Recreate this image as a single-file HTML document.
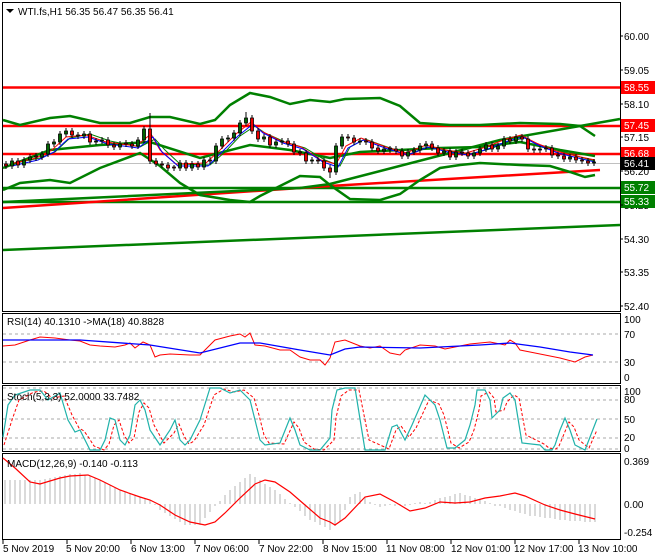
<!DOCTYPE html>
<html><head><meta charset="utf-8">
<style>
html,body{margin:0;padding:0;background:#fff;}
svg{display:block;font-family:"Liberation Sans",sans-serif;font-size:10px;}
</style></head><body>
<svg width="660" height="560" viewBox="0 0 660 560" xmlns="http://www.w3.org/2000/svg">
<rect width="660" height="560" fill="#fff"/>
<g fill="none" stroke="#000" stroke-width="1">
<rect x="2.5" y="2.5" width="618" height="309"/>
<rect x="2.5" y="313.5" width="618" height="70"/>
<rect x="2.5" y="385.5" width="618" height="66"/>
<rect x="2.5" y="453.5" width="618" height="86"/>
</g>

<!-- main chart -->
<line x1="3" y1="163.5" x2="620" y2="163.5" stroke="#c0c0c0"/>
<g stroke-width="2.5">
<line x1="3" y1="87.5" x2="620" y2="87.5" stroke="#f00"/>
<line x1="3" y1="126" x2="620" y2="126" stroke="#f00"/>
<line x1="3" y1="154" x2="620" y2="154" stroke="#f00"/>
<line x1="3" y1="188" x2="620" y2="188" stroke="#008000"/>
<line x1="3" y1="202" x2="620" y2="202" stroke="#008000"/>
</g>
<g fill="none" stroke-width="2.5">
<polyline points="3,250 620,225" stroke="#008000"/>
<polyline points="3,208 330,186 600,170" stroke="#f00"/>
<polyline points="3,202 300,188 330,184 500,140 620,119" stroke="#008000"/>
<polyline stroke="#008000" points="3,120 20,125 50,118 70,116 100,123 130,123 150,117 170,117 200,124 215,120 230,105 250,93 270,97 290,104 310,100 330,102 345,99 380,98 400,106 420,123 450,125 480,125 520,123 560,124 580,126 595,136"/>
<polyline stroke="#008000" points="3,190 20,183 50,180 70,183 100,168 140,153 160,166 180,183 200,195 230,200 250,202 260,196 280,186 300,176 320,177 330,185 350,199 380,200 400,194 420,180 440,168 460,165 480,163 520,165 550,166 570,172 585,177 595,175"/>
<polyline stroke="#008000" points="3,168 50,150 100,145 150,142 200,158 250,145 290,150 330,158 360,152 400,150 440,148 480,147 520,142 560,150 595,156"/>
</g>
<g fill="none" stroke-width="1">
<polyline stroke="#008000" points="15,163 40,158 55,152 70,138 90,134 110,141 140,147 155,139 165,150 180,164 210,165 225,152 240,136 255,126 265,133 285,142 305,148 325,160 340,166 350,147 365,139 390,148 410,154 430,147 450,151 470,154 490,149 510,141 525,138 540,145 560,151 580,157 595,161"/>
<polyline stroke="#f00" points="10,164 36,158 52,150 66,137 86,135 106,142 136,146 151,134 160,150 176,164 206,163 220,150 236,134 251,122 261,131 281,141 301,147 321,160 336,164 346,146 361,138 386,147 406,153 426,145 446,150 466,153 486,147 506,139 521,135 536,143 556,151 576,156 595,160"/>
<polyline stroke="#00f" points="12,166 38,160 54,152 68,139 88,137 108,144 138,148 153,137 162,152 178,166 208,166 222,152 238,136 253,124 263,133 283,143 303,149 323,162 338,167 348,148 363,140 388,149 408,155 428,147 448,152 468,155 488,149 508,141 523,137 538,145 558,153 578,158 595,162"/>
</g>
<path stroke="#000" stroke-width="1" fill="none" d="M6 161V169M12 158V169M18 158V168M24 157V168M30 154V163M36 153V161M42 151V160M48 141V157M54 139V147M60 131V145M66 128V137M72 128V138M78 132V139M84 131V139M90 131V145M96 138V145M102 137V144M108 137V148M114 142V150M120 141V150M126 140V147M132 141V149M138 137V149M144 126V143M150 113V164M156 158V167M162 161V168M168 162V171M174 165V171M180 160V171M186 160V171M192 161V171M198 161V170M204 157V170M210 157V164M216 143V164M222 136V149M228 135V142M234 130V141M240 120V136M246 112V126M252 115V134M258 128V142M264 134V142M270 134V148M276 139V148M282 138V145M288 138V147M294 141V155M300 149V156M306 150V164M312 157V164M318 157V164M324 158V171M330 165V178M336 143V175M342 134V149M348 134V141M354 135V145M360 138V145M366 138V145M372 139V151M378 145V154M384 146V154M390 146V153M396 146V154M402 148V159M408 149V159M414 147V155M420 143V153M426 141V149M432 141V151M438 145V156M444 148V156M450 148V160M456 149V160M462 149V156M468 150V159M474 150V159M480 146V156M486 142V152M492 142V152M498 143V152M504 136V149M510 136V144M516 134V144M522 134V142M528 136V152M534 146V153M540 146V153M546 145V152M552 145V158M558 152V159M564 153V162M570 154V162M576 154V163M582 157V164M588 158V166M594 159V166"/>
<path fill="#006400" stroke="#000" stroke-width="0.8" d="M10.5 161h3v5h-3zM22.5 160h3v5h-3zM28.5 157h3v3h-3zM40.5 154h3v3h-3zM46.5 144h3v10h-3zM52.5 142h3v2h-3zM58.5 134h3v8h-3zM64.5 131h3v3h-3zM82.5 134h3v2h-3zM94.5 141h3v1h-3zM100.5 140h3v1h-3zM118.5 144h3v3h-3zM136.5 140h3v6h-3zM142.5 129h3v11h-3zM178.5 163h3v5h-3zM190.5 164h3v4h-3zM202.5 160h3v7h-3zM214.5 146h3v15h-3zM220.5 139h3v7h-3zM226.5 138h3v1h-3zM232.5 133h3v5h-3zM238.5 123h3v10h-3zM244.5 118h3v5h-3zM262.5 137h3v2h-3zM274.5 142h3v3h-3zM280.5 141h3v1h-3zM310.5 160h3v1h-3zM334.5 146h3v26h-3zM340.5 137h3v9h-3zM358.5 141h3v1h-3zM382.5 149h3v2h-3zM406.5 152h3v4h-3zM412.5 150h3v2h-3zM418.5 146h3v4h-3zM424.5 144h3v2h-3zM442.5 151h3v2h-3zM454.5 152h3v5h-3zM472.5 153h3v3h-3zM478.5 149h3v4h-3zM484.5 145h3v4h-3zM496.5 146h3v3h-3zM502.5 139h3v7h-3zM514.5 137h3v4h-3zM538.5 149h3v1h-3zM544.5 148h3v1h-3zM568.5 157h3v2h-3zM592.5 162h3v1h-3z"/>
<path fill="#e00" stroke="#000" stroke-width="0.8" d="M4.5 164h3v2h-3zM16.5 161h3v4h-3zM34.5 156h3v1h-3zM70.5 131h3v4h-3zM76.5 135h3v1h-3zM88.5 134h3v8h-3zM106.5 140h3v5h-3zM112.5 145h3v2h-3zM124.5 143h3v1h-3zM130.5 144h3v2h-3zM148.5 129h3v32h-3zM154.5 161h3v3h-3zM160.5 164h3v1h-3zM166.5 165h3v3h-3zM172.5 167h3v1h-3zM184.5 163h3v5h-3zM196.5 164h3v3h-3zM208.5 160h3v1h-3zM250.5 118h3v13h-3zM256.5 131h3v8h-3zM268.5 137h3v8h-3zM286.5 141h3v3h-3zM292.5 144h3v8h-3zM298.5 152h3v1h-3zM304.5 153h3v8h-3zM316.5 160h3v1h-3zM322.5 161h3v7h-3zM328.5 168h3v4h-3zM346.5 137h3v1h-3zM352.5 138h3v4h-3zM364.5 141h3v1h-3zM370.5 142h3v6h-3zM376.5 148h3v3h-3zM388.5 148h3v1h-3zM394.5 149h3v2h-3zM400.5 151h3v5h-3zM430.5 144h3v4h-3zM436.5 148h3v5h-3zM448.5 151h3v6h-3zM460.5 152h3v1h-3zM466.5 153h3v3h-3zM490.5 145h3v4h-3zM508.5 139h3v2h-3zM520.5 137h3v2h-3zM526.5 139h3v10h-3zM532.5 149h3v1h-3zM550.5 148h3v7h-3zM556.5 155h3v1h-3zM562.5 156h3v3h-3zM574.5 157h3v3h-3zM580.5 160h3v1h-3zM586.5 161h3v2h-3z"/>

<!-- sub panels grid -->
<g stroke="#aaa" stroke-dasharray="3,3">
<line x1="3" y1="334" x2="620" y2="334"/><line x1="3" y1="362" x2="620" y2="362"/>
<line x1="3" y1="388" x2="620" y2="388"/><line x1="3" y1="400" x2="620" y2="400"/><line x1="3" y1="419" x2="620" y2="419"/><line x1="3" y1="438" x2="620" y2="438"/><line x1="3" y1="449" x2="620" y2="449"/>
</g>
<polyline fill="none" stroke="#f00" stroke-width="1" points="3,346 15,345 30,340 40,337 55,338 70,340 80,341 90,345 100,346 115,347 125,345 130,343 135,348 143,342 150,345 155,357 160,355 170,354 190,355 200,355 205,350 210,345 215,340 230,336 240,334 245,337 250,333 255,345 265,346 280,350 290,350 300,357 310,360 320,360 325,365 330,358 335,342 345,340 355,344 360,346 370,348 380,346 390,353 400,355 405,350 420,345 435,346 445,349 460,346 470,344 490,342 505,345 510,340 515,343 520,350 530,352 545,355 560,358 575,362 585,357 593,355"/>
<polyline fill="none" stroke="#00f" stroke-width="1.3" points="3,340 80,340 150,345 200,353 240,343 260,343 300,350 330,355 345,349 360,347 420,348 480,345 510,343 540,347 570,352 593,355"/>
<polyline fill="none" stroke="#f00" stroke-width="1" stroke-dasharray="3,2" points="4,445 12,420 19,400 34,392 44,391 52,398 64,396 72,415 79,428 84,431 89,438 94,446 104,450 109,444 114,425 119,420 124,435 129,443 134,438 139,412 144,403 149,408 154,425 164,443 174,433 179,424 184,436 189,444 194,441 204,425 214,395 224,389 234,392 244,390 254,398 259,415 264,435 269,443 284,444 294,422 299,428 304,442 314,449 324,450 334,440 336,418 341,396 349,390 359,390 369,440 389,449 396,430 401,426 409,437 416,428 429,400 439,404 444,415 451,443 459,448 469,442 474,430 479,410 481,396 489,392 494,398 496,412 504,410 507,402 514,395 519,398 526,435 544,444 549,448 556,449 559,446 564,434 569,422 574,427 579,440 589,448 597,430"/>
<polyline fill="none" stroke="#20b2aa" stroke-width="1.2" points="3,437 8,405 15,395 30,390 40,390 48,400 60,393 68,420 75,432 80,430 85,440 90,450 100,450 105,440 110,418 115,420 120,440 125,445 130,435 135,405 140,400 145,410 150,430 160,445 170,430 175,420 180,440 185,445 190,440 200,420 210,388 220,388 230,393 240,390 250,400 255,420 260,440 265,445 280,443 290,418 295,430 300,445 310,450 320,450 330,438 332,410 337,390 345,388 355,388 365,450 385,450 392,427 397,425 405,440 412,425 425,395 435,405 440,420 447,448 455,448 465,440 470,425 475,405 477,390 485,390 490,400 492,418 500,410 503,398 510,393 515,400 522,443 540,445 545,450 552,450 555,445 560,430 565,418 570,430 575,445 585,450 597,419"/>
<path stroke="#b4b4b4" stroke-width="1" fill="none" d="M5 504V480M10 504V480M15 504V480M20 504V480M25 504V480M30 504V480M35 504V480M40 504V480M45 504V479M50 504V478M55 504V477M60 504V476M65 504V475M70 504V474M75 504V474M80 504V473M85 504V475M90 504V476M95 504V478M100 504V480M105 504V482M110 504V485M115 504V487M120 504V490M125 504V492M130 504V493M135 504V495M140 504V497M145 504V498M150 504V500M155 504V505M160 504V510M165 504V513M170 504V516M175 504V519M180 504V522M185 504V525M190 504V525M195 504V525M200 504V525M205 504V518M210 504V512M215 504V506M220 504V501M225 504V495M230 504V490M235 504V486M240 504V482M245 504V478M250 504V474M255 504V477M260 504V480M265 504V484M270 504V487M275 504V490M280 504V494M285 504V499M290 504V503M295 504V507M300 504V511M305 504V516M310 504V520M315 504V522M320 504V525M325 504V527M330 504V530M335 504V526M340 504V522M345 504V510M350 504V497M355 504V494M360 504V492M365 504V497M370 504V502M375 504V505M380 504V507M385 504V506M390 504V505M395 504V506M400 504V505M405 504V506M410 504V505M415 504V503M420 504V502M425 504V503M430 504V502M435 504V500M440 504V498M445 504V497M450 504V496M455 504V494M460 504V493M465 504V495M470 504V496M475 504V498M480 504V500M485 504V501M490 504V503M495 504V506M500 504V506M505 504V508M510 504V510M515 504V511M520 504V513M525 504V514M530 504V516M535 504V516M540 504V517M545 504V518M550 504V518M555 504V519M560 504V520M565 504V520M570 504V521M575 504V521M580 504V521M585 504V522M590 504V522M595 504V522"/>
<polyline fill="none" stroke="#f00" stroke-width="1.2" points="3,458 15,468 30,482 40,484 60,478 70,476 88,475 100,480 120,490 140,497 150,500 160,505 175,515 190,522 205,525 215,522 225,513 240,498 255,484 265,480 275,482 290,492 305,505 320,518 330,522 335,525 345,518 365,497 380,494 395,502 410,511 425,508 440,502 455,503 470,502 485,498 500,496 515,493 525,496 545,505 560,510 575,514 595,519"/>

<!-- labels -->
<polygon points="6,9 14,9 10,13" fill="#000"/>
<text x="18" y="15" fill="#000">WTI.fs,H1  56.35 56.47 56.35 56.41</text>
<text x="7" y="325" fill="#000">RSI(14) 40.1310  -&gt;MA(18) 40.8828</text>
<text x="7" y="400" fill="#000">Stoch(5,3,3) 52.0000 33.7482</text>
<text x="7" y="467" fill="#000">MACD(12,26,9) -0.140 -0.113</text>
<g fill="#000">
<text x="624" y="40">60.00</text><text x="624" y="74">59.05</text><text x="624" y="108">58.10</text><text x="624" y="141">57.15</text><text x="624" y="175">56.20</text><text x="624" y="209">55.25</text><text x="624" y="243">54.30</text><text x="624" y="276">53.35</text><text x="624" y="310">52.40</text>
<text x="624" y="323">100</text><text x="624" y="338">70</text><text x="624" y="366">30</text><text x="624" y="381">0</text>
<text x="624" y="395">100</text><text x="624" y="403">80</text><text x="624" y="423">50</text><text x="624" y="441">20</text><text x="624" y="452">0</text>
<text x="624" y="465">0.369</text><text x="624" y="508">0.00</text><text x="624" y="536">-0.254</text>
</g>
<rect x="621" y="81" width="34" height="13" fill="#f00"/><text x="624" y="91" fill="#fff">58.55</text>
<rect x="621" y="119" width="34" height="13" fill="#f00"/><text x="624" y="129" fill="#fff">57.45</text>
<rect x="621" y="147" width="34" height="13" fill="#f00"/><text x="624" y="157" fill="#fff">56.68</text>
<rect x="621" y="157" width="34" height="13" fill="#000"/><text x="624" y="167" fill="#fff">56.41</text>
<rect x="621" y="181" width="34" height="13" fill="#008000"/><text x="624" y="191" fill="#fff">55.72</text>
<rect x="621" y="195" width="34" height="13" fill="#008000"/><text x="624" y="205" fill="#fff">55.33</text>
<g stroke="#000">
<line x1="620" y1="36" x2="623" y2="36"/><line x1="620" y1="70" x2="623" y2="70"/><line x1="620" y1="104" x2="623" y2="104"/><line x1="620" y1="137" x2="623" y2="137"/><line x1="620" y1="171" x2="623" y2="171"/><line x1="620" y1="205" x2="623" y2="205"/><line x1="620" y1="239" x2="623" y2="239"/><line x1="620" y1="272" x2="623" y2="272"/><line x1="620" y1="306" x2="623" y2="306"/>
<line x1="3" y1="540" x2="3" y2="544"/><line x1="67" y1="540" x2="67" y2="544"/><line x1="131" y1="540" x2="131" y2="544"/><line x1="195" y1="540" x2="195" y2="544"/><line x1="259" y1="540" x2="259" y2="544"/><line x1="323" y1="540" x2="323" y2="544"/><line x1="387" y1="540" x2="387" y2="544"/><line x1="451" y1="540" x2="451" y2="544"/><line x1="515" y1="540" x2="515" y2="544"/><line x1="579" y1="540" x2="579" y2="544"/>
</g>
<g fill="#000">
<text x="3" y="552">5 Nov 2019</text><text x="66" y="552">5 Nov 20:00</text><text x="131" y="552">6 Nov 13:00</text><text x="195" y="552">7 Nov 06:00</text><text x="259" y="552">7 Nov 22:00</text><text x="323" y="552">8 Nov 15:00</text><text x="386" y="552">11 Nov 08:00</text><text x="451" y="552">12 Nov 01:00</text><text x="514" y="552">12 Nov 17:00</text><text x="578" y="552">13 Nov 10:00</text>
</g>
</svg>
</body></html>
